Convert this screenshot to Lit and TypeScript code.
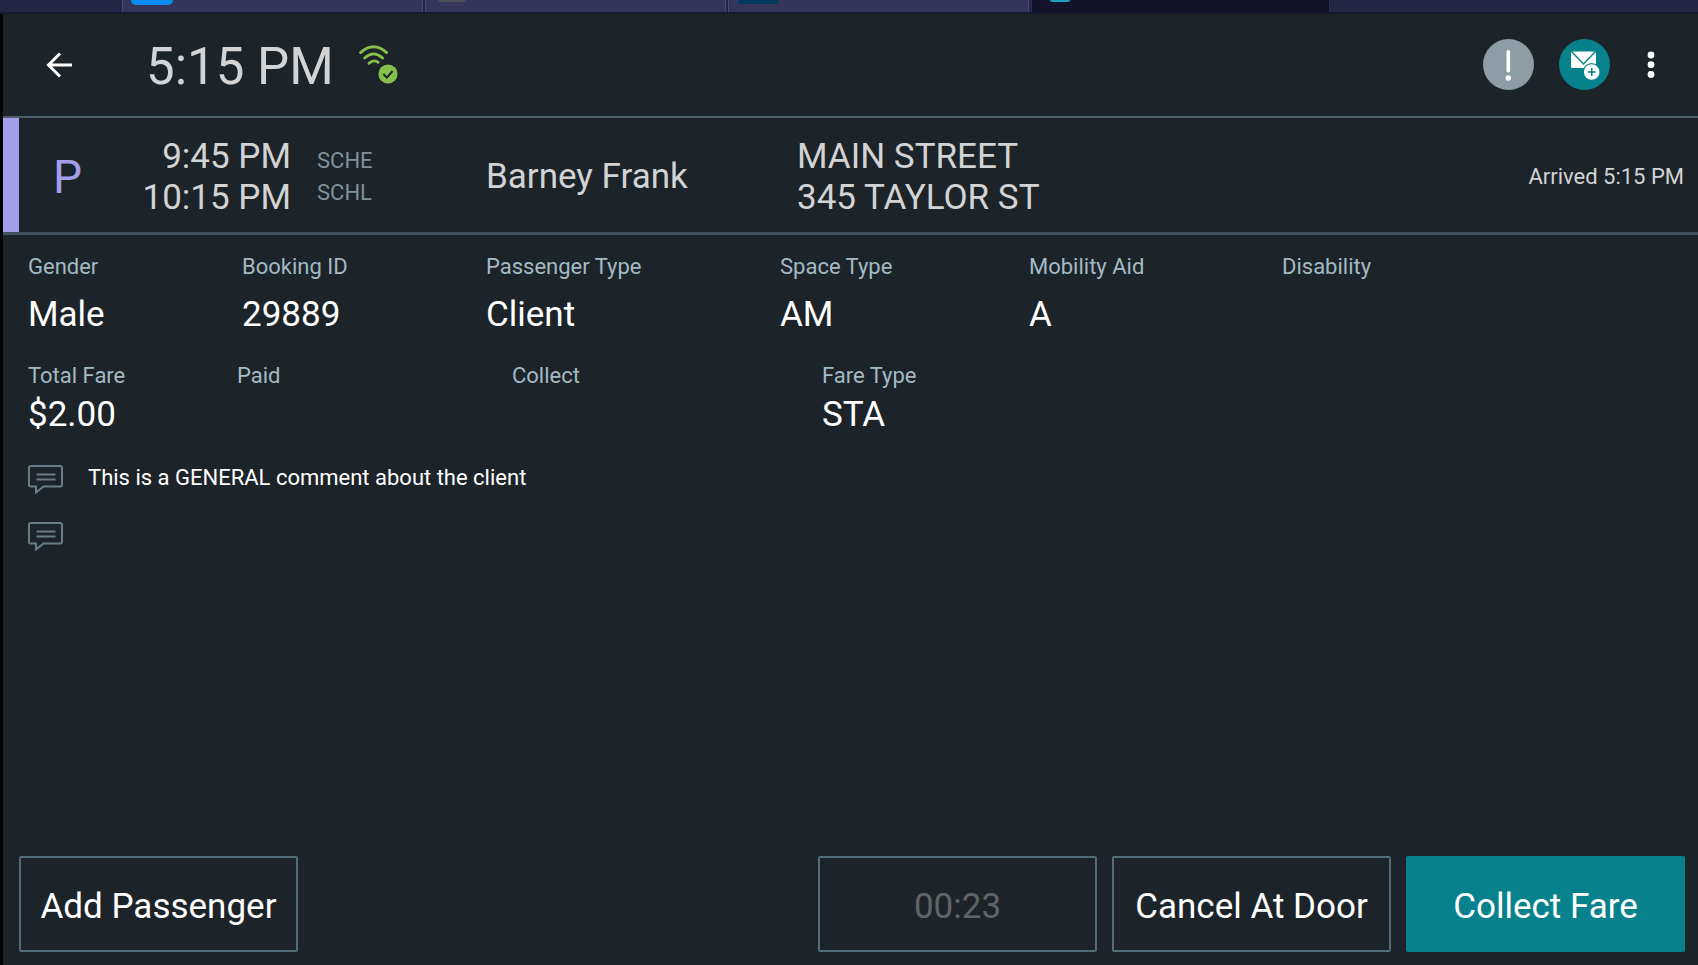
import { LitElement, html, css, svg } from "lit";
import { customElement, property } from "lit/decorators.js";

interface Field {
  label: string;
  value: string;
}

@customElement("browser-tabs")
class BrowserTabs extends LitElement {
  static styles = css`
    :host {
      display: flex;
      height: 12px;
      gap: 2px;
      padding-left: 122px;
      background: #222544;
      border-bottom: 2px solid #17172f;
      overflow: hidden;
    }
    .tab {
      box-sizing: border-box;
      width: 301px;
      padding: 0 8px;
      background: #35355b;
      border: solid #4a4a78;
      border-width: 0 1px;
    }
    .tab.active {
      width: 299px;
      background: #12122a;
      border-color: #2e2e55;
    }
    .icon {
      display: block;
      width: 42px;
      height: 5px;
      background: #0a8cf0;
      border-radius: 0 0 5px 5px;
    }
    .icon.grey {
      width: 28px;
      height: 2px;
      margin-left: 4px;
      background: #4d4f58;
    }
    .icon.deep {
      width: 40px;
      height: 4px;
      margin-left: 1px;
      background: #00395c;
      border-radius: 0 0 2px 2px;
    }
    .icon.cyan {
      width: 20px;
      height: 2px;
      margin-left: 10px;
      background: #17a3bd;
    }
  `;
  render() {
    return html`
      <div class="tab"><span class="icon"></span></div>
      <div class="tab"><span class="icon grey"></span></div>
      <div class="tab"><span class="icon deep"></span></div>
      <div class="tab active"><span class="icon cyan"></span></div>
    `;
  }
}

@customElement("field-row")
class FieldRow extends LitElement {
  @property({ attribute: false }) fields: Field[] = [];
  static styles = css`
    :host {
      display: block;
    }
    .row {
      display: grid;
      grid-template-columns: var(--columns);
      margin: 0;
    }
    .field {
      display: flex;
      flex-direction: column;
      gap: var(--field-gap);
    }
    dt {
      font-size: 22px;
      line-height: 26px;
      color: #a3bac4;
    }
    dd {
      margin: 0;
      min-height: 41px;
      font-size: 35px;
      line-height: 41px;
      color: #fff;
    }
  `;
  render() {
    return html`<dl class="row">
      ${this.fields.map(
        (f) => html`<div class="field"><dt>${f.label}</dt><dd>${f.value}</dd></div>`
      )}
    </dl>`;
  }
}

const backIcon = svg`<svg width="26" height="26" viewBox="0 0 26 26" fill="none" stroke="#fff" stroke-width="3">
  <path d="M26 13H3M14 1.500L2.500 13L14 24.500"/></svg>`;

const wifiIcon = svg`<svg width="39" height="39" viewBox="0 0 39 39" fill="none" stroke="#86c04c" stroke-width="2.800" stroke-linecap="round">
  <path d="M1.600 7.600Q14.500 -4.200 27.600 7.600"/>
  <path d="M5.600 13Q14.500 4.800 23.600 13"/>
  <path d="M10 18.300Q14.500 14 19.200 17.300"/>
  <circle cx="29" cy="29" r="9.600" fill="#86c04c" stroke="none"/>
  <path d="M24.400 29L27.800 32.600L33.600 26" stroke="#1d2429" stroke-width="2" stroke-linecap="butt"/></svg>`;

const alertIcon = svg`<svg width="51" height="51" viewBox="0 0 51 51">
  <circle cx="25.500" cy="25.500" r="25.500" fill="#8c9da6"/>
  <rect x="23.500" y="11" width="3.600" height="22.500" rx="1.800" fill="#fff"/>
  <circle cx="25.300" cy="39" r="2.700" fill="#fff"/></svg>`;

const mailIcon = svg`<svg width="51" height="51" viewBox="0 0 51 51">
  <circle cx="25.500" cy="25.500" r="25.500" fill="#07828c"/>
  <rect x="12" y="12.500" width="25" height="16.500" rx="1.500" fill="#fff"/>
  <path d="M12.500 12.500L24.500 25L36.500 12.500" fill="none" stroke="#07828c" stroke-width="1.400"/>
  <circle cx="32.700" cy="33" r="9" fill="#07828c"/>
  <circle cx="32.700" cy="33" r="7.800" fill="#fff"/>
  <path d="M32.700 29V37M28.700 33H36.700" stroke="#07828c" stroke-width="1.600"/></svg>`;

const menuIcon = svg`<svg width="8" height="28" viewBox="0 0 8 28" fill="#fff">
  <circle cx="4" cy="4" r="3.400"/><circle cx="4" cy="13.700" r="3.400"/><circle cx="4" cy="23.400" r="3.400"/></svg>`;

const commentIcon = svg`<svg width="35" height="29" viewBox="0 0 35 29" fill="none" stroke="#697d86" stroke-width="2">
  <path d="M3 1H32Q34 1 34 2.500V20Q34 21.500 32 21.500H15.500L8 27.500V21.500H3Q1 21.500 1 20V2.500Q1 1 3 1Z"/>
  <path d="M8.500 9.500H27.500M8.500 14.500H27.500"/></svg>`;

@customElement("app-root")
class AppRoot extends LitElement {
  static styles = css`
    :host {
      display: flex;
      flex-direction: column;
      min-height: 100vh;
      background: #1d2429;
      color: #d2d3d4;
      font-family: Roboto, "Liberation Sans", sans-serif;
    }
    .app {
      flex: 1;
      display: flex;
      flex-direction: column;
      border-left: 3px solid #000;
    }
    button {
      font-family: inherit;
      color: #fff;
      background: none;
      border: none;
      padding: 0;
      cursor: pointer;
    }
    svg {
      display: block;
      flex: none;
    }
    .toolbar {
      display: flex;
      align-items: center;
      height: 101px;
      padding: 0 43px 1px;
      border-bottom: 2px solid #4b5f6b;
    }
    .clock {
      margin: 5px 25px 0 74px;
      font-size: 51px;
      font-weight: 400;
      line-height: 60px;
    }
    .actions {
      display: flex;
      align-items: center;
      gap: 25px;
      margin-left: auto;
    }
    .menu {
      margin-left: 12px;
    }
    .trip {
      display: grid;
      grid-template-columns: 90px 148px 195px 311fr 887fr;
      align-items: center;
      height: 114px;
      box-sizing: border-box;
      padding: 3px 14px 0 34px;
      border-left: 16px solid #a49fec;
      font-size: 35px;
      line-height: 41px;
    }
    .divider {
      width: 100%;
      height: 3px;
      margin: 0;
      border: 0;
      background: #42545f;
    }
    .kind {
      font-size: 46px;
      line-height: 54px;
      color: #a49fec;
    }
    .times {
      display: flex;
      flex-direction: column;
      align-items: flex-end;
      white-space: nowrap;
    }
    .codes {
      padding-left: 26px;
      font-size: 22px;
      line-height: 32px;
      color: #7f929c;
    }
    .arrived {
      font-size: 22px;
      line-height: 26px;
    }
    .place {
      display: flex;
      justify-content: space-between;
      align-items: center;
    }
    .details {
      flex: 1;
      display: flex;
      flex-direction: column;
      gap: 28px;
      padding: 19px 0 30px 25px;
    }
    .booking {
      --columns: 214fr 244fr 294fr 249fr 253fr 416fr;
      --field-gap: 14px;
    }
    .fare {
      --columns: 209fr 275fr 310fr 876fr;
      --field-gap: 5px;
    }
    .comments {
      display: flex;
      flex-direction: column;
      gap: 28px;
      margin: 0;
      padding: 2px 0 0;
      list-style: none;
      font-size: 22px;
      line-height: 26px;
      color: #fff;
    }
    .comments li {
      display: flex;
      gap: 25px;
      min-height: 29px;
    }
    .footer {
      display: flex;
      gap: 15px;
      padding: 0 13px 13px 16px;
    }
    .btn {
      box-sizing: border-box;
      width: 279px;
      height: 96px;
      padding-top: 4px;
      border: 2px solid #546c77;
      border-radius: 2px;
      font-size: 35px;
      line-height: 41px;
      white-space: nowrap;
    }
    .first {
      margin-right: auto;
    }
    .btn:disabled {
      color: #606467;
    }
    .primary {
      background: #07828c;
      border-color: #07828c;
    }
  `;

  booking: Field[] = [
    { label: "Gender", value: "Male" },
    { label: "Booking ID", value: "29889" },
    { label: "Passenger Type", value: "Client" },
    { label: "Space Type", value: "AM" },
    { label: "Mobility Aid", value: "A" },
    { label: "Disability", value: "" },
  ];
  fare: Field[] = [
    { label: "Total Fare", value: "$2.00" },
    { label: "Paid", value: "" },
    { label: "Collect", value: "" },
    { label: "Fare Type", value: "STA" },
  ];
  comments = ["This is a GENERAL comment about the client", ""];

  render() {
    return html`
      <browser-tabs></browser-tabs>
      <div class="app">
        <header class="toolbar">
          <button aria-label="Back">${backIcon}</button>
          <h1 class="clock">5:15 PM</h1>
          ${wifiIcon}
          <div class="actions">
            <button aria-label="Alert">${alertIcon}</button>
            <button aria-label="New message">${mailIcon}</button>
            <button class="menu" aria-label="More options">${menuIcon}</button>
          </div>
        </header>
        <section class="trip">
          <div class="kind">P</div>
          <div class="times"><span>9:45 PM</span><span>10:15 PM</span></div>
          <div class="codes"><div>SCHE</div><div>SCHL</div></div>
          <div>Barney Frank</div>
          <div class="place">
            <div><div>MAIN STREET</div><div>345 TAYLOR ST</div></div>
            <div class="arrived">Arrived 5:15 PM</div>
          </div>
        </section>
        <hr class="divider" />
        <main class="details">
          <field-row class="booking" .fields=${this.booking}></field-row>
          <field-row class="fare" .fields=${this.fare}></field-row>
          <ul class="comments">
            ${this.comments.map((c) => html`<li>${commentIcon}<span>${c}</span></li>`)}
          </ul>
        </main>
        <footer class="footer">
          <button class="btn first">Add Passenger</button>
          <button class="btn" disabled>00:23</button>
          <button class="btn">Cancel At Door</button>
          <button class="btn primary">Collect Fare</button>
        </footer>
      </div>
    `;
  }
}
